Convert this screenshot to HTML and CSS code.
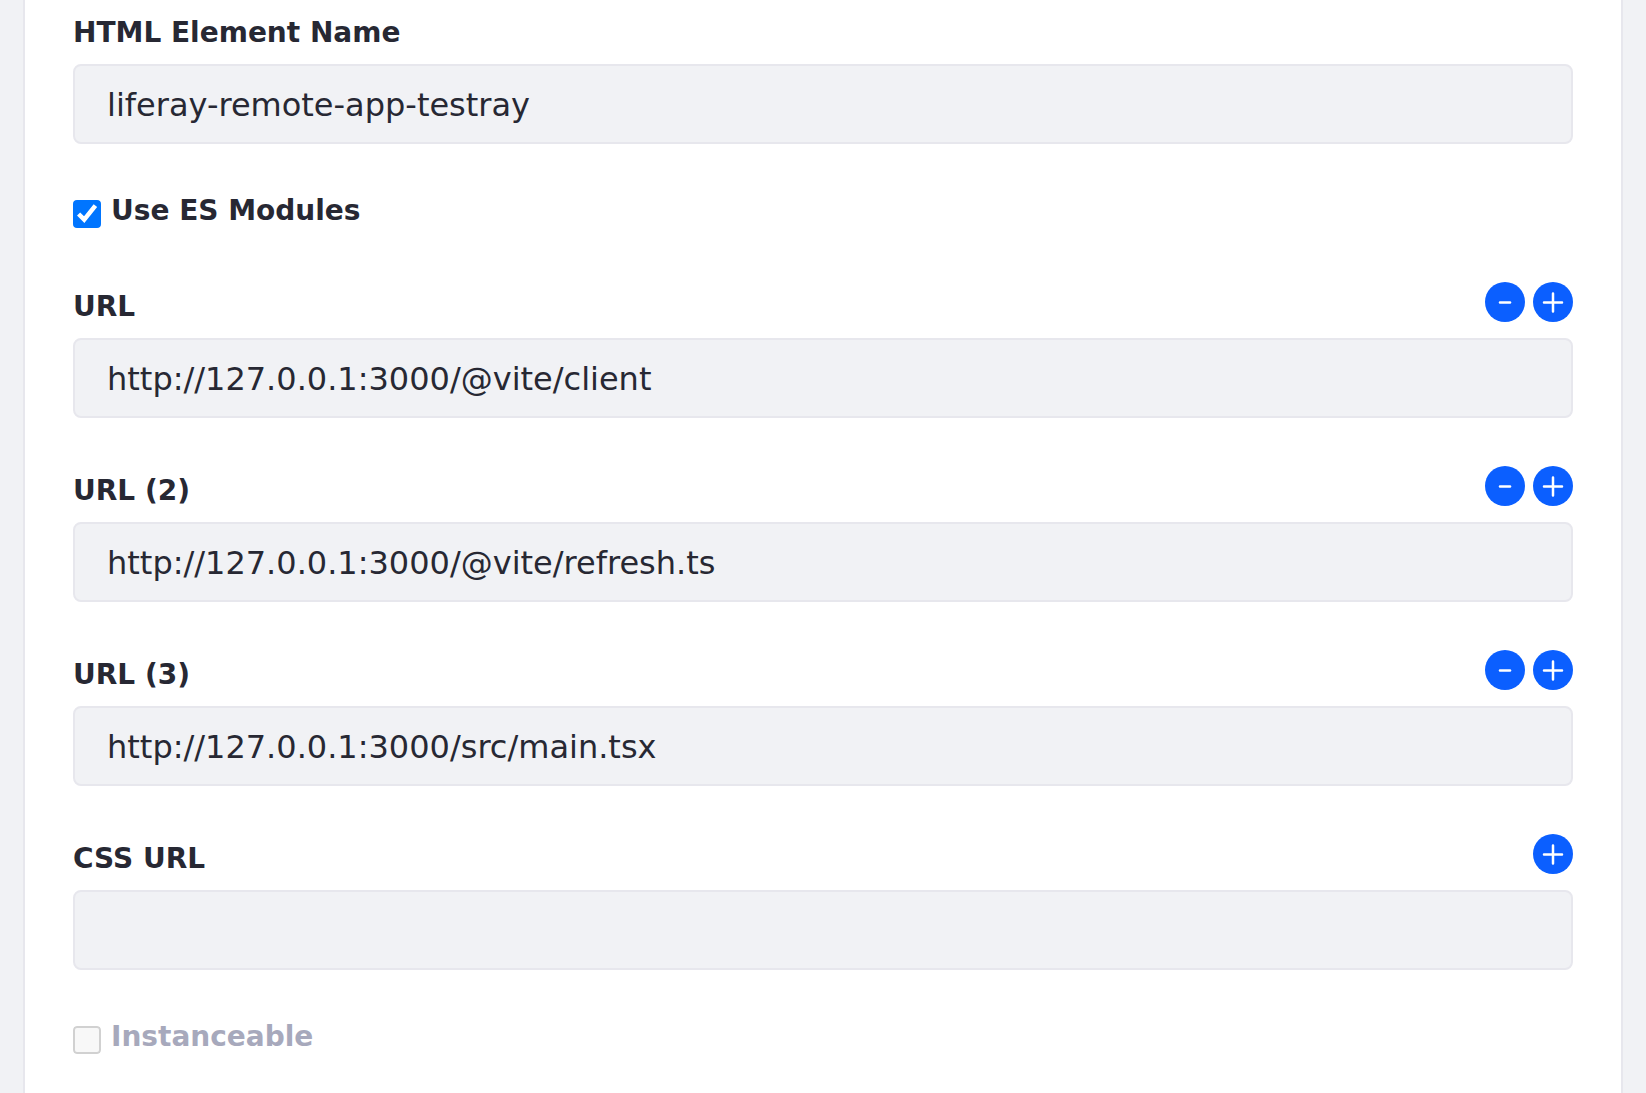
FILE: index.html
```html
<!DOCTYPE html>
<html lang="en">
<head>
<meta charset="utf-8">
<meta name="viewport" content="width=device-width, initial-scale=1">
<title>Remote App</title>
<link rel="stylesheet" href="styles.css">
</head>
<body>
<svg class="sprite" aria-hidden="true">
  <symbol id="minus" viewBox="0 0 40 40"><path d="M15 20.5H25"/></symbol>
  <symbol id="plus" viewBox="0 0 40 40"><path d="M11 20.5H29M20 11.5V29.5"/></symbol>
</svg>
<form class="sheet">
  <div class="field">
    <label class="label" for="element-name">HTML Element Name</label>
    <input class="text-input" id="element-name" type="text" value="liferay-remote-app-testray">
  </div>

  <div class="check">
    <input class="checkbox" id="es-modules" type="checkbox" checked>
    <label class="check-label" for="es-modules">Use ES Modules</label>
  </div>

  <div class="field">
    <div class="field-head">
      <label class="label" for="url-1">URL</label>
      <div class="actions">
        <button class="round-button" type="button" aria-label="Remove"><svg class="icon"><use href="#minus"/></svg></button>
        <button class="round-button" type="button" aria-label="Add"><svg class="icon"><use href="#plus"/></svg></button>
      </div>
    </div>
    <input class="text-input" id="url-1" type="text" value="http://127.0.0.1:3000/@vite/client">
  </div>

  <div class="field">
    <div class="field-head">
      <label class="label" for="url-2">URL (2)</label>
      <div class="actions">
        <button class="round-button" type="button" aria-label="Remove"><svg class="icon"><use href="#minus"/></svg></button>
        <button class="round-button" type="button" aria-label="Add"><svg class="icon"><use href="#plus"/></svg></button>
      </div>
    </div>
    <input class="text-input" id="url-2" type="text" value="http://127.0.0.1:3000/@vite/refresh.ts">
  </div>

  <div class="field">
    <div class="field-head">
      <label class="label" for="url-3">URL (3)</label>
      <div class="actions">
        <button class="round-button" type="button" aria-label="Remove"><svg class="icon"><use href="#minus"/></svg></button>
        <button class="round-button" type="button" aria-label="Add"><svg class="icon"><use href="#plus"/></svg></button>
      </div>
    </div>
    <input class="text-input" id="url-3" type="text" value="http://127.0.0.1:3000/src/main.tsx">
  </div>

  <div class="field">
    <div class="field-head">
      <label class="label" for="css-url">CSS URL</label>
      <div class="actions">
        <button class="round-button" type="button" aria-label="Add"><svg class="icon"><use href="#plus"/></svg></button>
      </div>
    </div>
    <input class="text-input" id="css-url" type="text">
  </div>

  <div class="check">
    <input class="checkbox" id="instanceable" type="checkbox" disabled>
    <label class="check-label" for="instanceable">Instanceable</label>
  </div>
</form>
</body>
</html>
```
FILE: styles.css
```css
* {
  box-sizing: border-box;
}

body {
  margin: 0;
  background: #f1f2f5;
  color: #272833;
  font-family: "DejaVu Sans", sans-serif;
}

.sprite {
  display: none;
}

.sheet {
  display: flex;
  flex-direction: column;
  gap: 48px;
  min-height: 100vh;
  margin: 0 23px;
  padding: 18px 48px 32px;
  background: #fff;
  border: solid #e7e7ed;
  border-width: 0 2px;
}

.field {
  display: flex;
  flex-direction: column;
  gap: 16px;
}

.field-head {
  display: flex;
  align-items: flex-end;
  justify-content: space-between;
}

.label,
.check-label {
  font-size: 28px;
  font-weight: 700;
  line-height: 30px;
}

.actions {
  display: flex;
  gap: 8px;
}

.round-button {
  width: 40px;
  height: 40px;
  padding: 0;
  border: 0;
  border-radius: 50%;
  background: #0b5fff;
  color: #fff;
}

.icon {
  display: block;
  width: 40px;
  height: 40px;
  fill: none;
  stroke: currentColor;
  stroke-width: 2.5;
  stroke-linecap: round;
}

.text-input {
  width: 100%;
  height: 80px;
  padding: 2px 32px 0;
  border: 2px solid #e7e7ed;
  border-radius: 8px;
  background: #f1f2f5;
  color: inherit;
  font-family: inherit;
  font-size: 32px;
}

.check {
  display: flex;
  align-items: flex-start;
  gap: 10px;
  min-height: 42px;
}

.check-label {
  line-height: 38px;
}

.checkbox {
  width: 28px;
  height: 28px;
  margin: 8px 0 0;
  clip-path: inset(0 round 4px);
}

.checkbox:disabled {
  appearance: none;
  border: 2px solid #d1d1d1;
  border-radius: 4px;
  background: #f8f8f8;
}

.checkbox:disabled + .check-label {
  color: #a7a9bc;
}
```
